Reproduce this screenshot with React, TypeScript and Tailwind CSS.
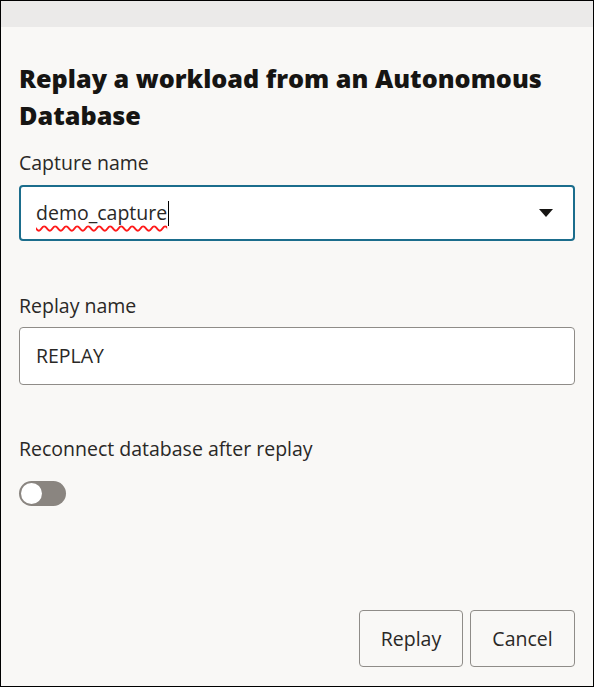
import React from "react";

export default function App() {
  const font = { fontFamily: '"Open Sans", "Noto Sans", sans-serif' };
  return (
    <div
      className="w-[594px] h-[687px] border border-black bg-[#f9f8f6] flex flex-col text-[#161513]"
      style={font}
    >
      <div className="h-[26px] bg-[#ebeae9] shrink-0" />
      <div className="flex flex-col flex-1 px-[18px] pt-[33px] pb-[19px]">
        <h1 className="text-[25.2px] leading-[37px] font-extrabold">
          Replay a workload from an Autonomous Database
        </h1>
        <label className="mt-[15px] text-[19.5px] leading-[27px] text-[#2a2826]">Capture name</label>
        <div className="mt-[9px] h-[56px] rounded-[4px] border-2 border-[#1b6d8c] bg-white flex items-center pl-[15px] pr-[20px]">
          <span className="text-[19.5px] underline decoration-wavy decoration-[#ff1a1a] decoration-[1.5px] underline-offset-[5px] text-[#2a2826]">
            demo_capture
          </span>
          <span className="w-px h-[25px] bg-black ml-px" />
          <div className="flex-1" />
          <svg width="14" height="8" viewBox="0 0 14 8">
            <path d="M0 0 L14 0 L7 8 Z" fill="#161513" />
          </svg>
        </div>
        <label className="mt-[51px] text-[19.5px] leading-[27px] text-[#2a2826]">Replay name</label>
        <div className="mt-[8px] h-[58px] rounded-[4px] border border-[#8f8c88] bg-white flex items-center pl-[16px]">
          <span className="text-[19.5px] text-[#2a2826]">REPLAY</span>
        </div>
        <label className="mt-[50px] text-[19.5px] leading-[27px] text-[#2a2826]">
          Reconnect database after replay
        </label>
        <div className="mt-[19px] w-[47px] h-[25px] rounded-full bg-[#8a8580] relative">
          <div className="absolute left-[2px] top-[2px] w-[21px] h-[21px] rounded-full bg-white" />
        </div>
        <div className="flex-1" />
        <div className="flex justify-end gap-[7px]">
          <button className="w-[104px] h-[57px] rounded-[4px] border border-[#8f8c88] bg-[#f9f8f6] text-[19.5px] text-[#2a2826]">
            Replay
          </button>
          <button className="w-[105px] h-[57px] rounded-[4px] border border-[#8f8c88] bg-[#f9f8f6] text-[19.5px] text-[#2a2826]">
            Cancel
          </button>
        </div>
      </div>
    </div>
  );
}
